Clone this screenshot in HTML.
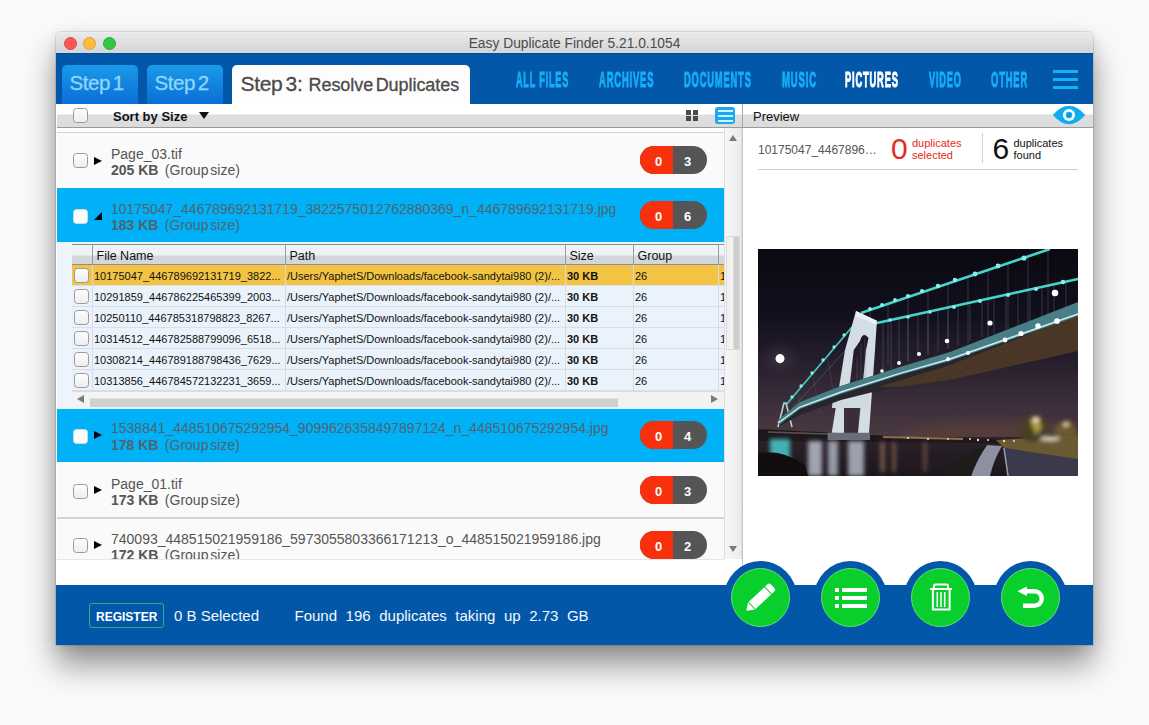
<!DOCTYPE html>
<html><head><meta charset="utf-8">
<style>
*{box-sizing:border-box;margin:0;padding:0}
html,body{width:1149px;height:725px;overflow:hidden;background:#fafafa;font-family:"Liberation Sans",sans-serif}
.a{position:absolute}
#win{position:absolute;left:56px;top:32px;width:1037px;height:613px;background:#fff;border-radius:5px 5px 0 0;box-shadow:0 0 0 1px rgba(0,0,0,0.10),0 20px 32px rgba(0,0,0,0.42),0 4px 14px rgba(0,0,0,0.10);overflow:hidden}
#title{left:0;top:0;width:1037px;height:23px;background:linear-gradient(#f4f4f4 0,#f4f4f4 1px,#e9e9e9 2px,#d9d9d9 18px,#d3d9df 19px,#d3d9df 22px);border-bottom:1px solid #0a4a92}
.tl{position:absolute;top:6px;width:13px;height:13px;border-radius:50%}
#ttext{left:0;width:1037px;top:5px;text-align:center;font-size:13.8px;color:#4b4b4b}
#hdr{left:0;top:23px;width:1037px;height:50px;background:#0357a8}
.tab{position:absolute;top:11px;height:39px;border-radius:5px 5px 0 0;background:linear-gradient(#1a9ae8,#0a6ed6);color:#8fd5fc;font-size:20.5px;letter-spacing:-0.4px;word-spacing:-2.5px;-webkit-text-stroke:0.3px currentColor}
.nav{position:absolute;top:12.5px;font-size:22px;font-weight:bold;color:#16aef6;transform-origin:0 0;white-space:nowrap;-webkit-text-stroke:1.1px currentColor;letter-spacing:2px}
.cb{position:absolute;width:15px;height:15px;border:1px solid #9a9a9a;border-radius:3.5px;background:linear-gradient(#fdfdfd,#eeeeee)}
.tri{position:absolute;width:0;height:0;border-top:4.5px solid transparent;border-bottom:4.5px solid transparent;border-left:8.5px solid #000}
.grp{position:absolute;left:1px;width:667px;background:#f9f9f9}
.gt{position:absolute;left:55px;top:1px;font-size:14px;line-height:16px;white-space:nowrap;margin-top:1px}
.th{font-size:12.5px;color:#111;white-space:nowrap}
.td{font-size:11px;line-height:13px;color:#111;white-space:nowrap}
.gname{position:absolute;left:55px;font-size:14px;color:#5a5a5a;white-space:nowrap}
.gsize{position:absolute;left:55px;font-size:14px;color:#5a5a5a;white-space:nowrap}
.gsize b{font-weight:bold}
.badge{position:absolute;left:584px;width:67px;height:28px;border-radius:14px;overflow:hidden;background:#555}
.badge .r{position:absolute;left:0;top:0;width:33px;height:28px;background:#f9300c}
.badge span{position:absolute;top:8px;width:33px;text-align:center;color:#fff;font-weight:bold;font-size:13px}
.row{position:absolute;left:16px;width:652px;height:21px;background:#eaf3fb;border-bottom:1px solid #d7dde3;font-size:11px;color:#111;white-space:nowrap}
.row .c{position:absolute;top:5px}
.vl{position:absolute;top:0;width:1px;background:#cfd6dc}
.btn .g{position:absolute;left:7px;top:7px;width:59px;height:59px;border-radius:50%;background:radial-gradient(circle at 50% 45%,#12cc30 0%,#10c22c 70%,#18b730 100%);border:1px solid #6fd77a}
</style></head><body>
<div id="win"><div id="in" style="position:absolute;left:0;top:-1px;width:1037px;height:614px">
  <div id="title" class="a">
    <div class="tl" style="left:8px;background:#fc5753;border:1px solid #de4440"></div>
    <div class="tl" style="left:27px;background:#fdbc40;border:1px solid #dea236"></div>
    <div class="tl" style="left:47px;background:#33c748;border:1px solid #27aa35"></div>
    <div id="ttext" class="a">Easy Duplicate Finder 5.21.0.1054</div>
  </div>
  <div id="hdr" class="a">
    <div class="tab" style="left:6px;width:76px"><span class="a" style="left:7.5px;top:5.5px">Step 1</span></div>
    <div class="tab" style="left:91px;width:76px"><span class="a" style="left:7.5px;top:5.5px">Step 2</span></div>
    <div class="tab" style="left:176px;width:238px;background:#fdfdfd;color:#4a4a4a"><span class="a" style="left:8.5px;top:7px;font-size:21px;letter-spacing:-0.3px">Step 3:</span><span class="a" style="left:76.5px;top:10px;font-size:18px;letter-spacing:-0.05px">Resolve Duplicates</span></div>
    <div class="nav" style="left:460px;transform:scaleX(0.4122)">ALL FILES</div>
    <div class="nav" style="left:543px;transform:scaleX(0.4266)">ARCHIVES</div>
    <div class="nav" style="left:628px;transform:scaleX(0.4238)">DOCUMENTS</div>
    <div class="nav" style="left:725.5px;transform:scaleX(0.4331)">MUSIC</div>
    <div class="nav" style="left:789px;transform:scaleX(0.4225);color:#fff">PICTURES</div>
    <div class="nav" style="left:873px;transform:scaleX(0.4185)">VIDEO</div>
    <div class="nav" style="left:935px;transform:scaleX(0.4261)">OTHER</div>
    <div class="a" style="left:997px;top:15.8px;width:25px;height:3.2px;background:#12b0f8"></div>
    <div class="a" style="left:997px;top:23.7px;width:25px;height:3.3px;background:#12b0f8"></div>
    <div class="a" style="left:997px;top:31.7px;width:25px;height:3.3px;background:#12b0f8"></div>
  </div>
  <!-- left toolbar -->
  <div class="a" style="left:1px;top:73px;width:685px;height:24px;background:linear-gradient(#fff 0,#fff 10px,#dedede 11px,#dcdcdc 100%);border-bottom:1px solid #9a9a9a"></div>
  <div class="cb" style="left:17px;top:77px"></div>
  <div class="a" style="left:57px;top:78px;font-size:13px;font-weight:bold;color:#111">Sort by Size</div>
  <div class="a" style="left:143px;top:81px;width:0;height:0;border-left:5px solid transparent;border-right:5px solid transparent;border-top:7px solid #111"></div>
  <!-- grid icon -->
  <div class="a" style="left:630px;top:79px;width:5px;height:5px;background:#4a4a4a"></div>
  <div class="a" style="left:637px;top:79px;width:5px;height:5px;background:#4a4a4a"></div>
  <div class="a" style="left:630px;top:85px;width:5px;height:5px;background:#4a4a4a"></div>
  <div class="a" style="left:637px;top:85px;width:5px;height:5px;background:#4a4a4a"></div>
  <!-- list icon -->
  <div class="a" style="left:659px;top:76px;width:20px;height:17px;border-radius:3px;background:#1aa8ee"></div>
  <div class="a" style="left:661.8px;top:78.6px;width:15px;height:2.8px;background:#c8f6ff"></div>
  <div class="a" style="left:661.8px;top:83.6px;width:15px;height:2.8px;background:#c8f6ff"></div>
  <div class="a" style="left:661.8px;top:88.6px;width:15px;height:2.8px;background:#c8f6ff"></div>
  <!-- preview header -->
  <div class="a" style="left:686px;top:73px;width:351px;height:24px;background:linear-gradient(#fff 0,#fff 10px,#dedede 11px,#dcdcdc 100%);border-bottom:1px solid #9a9a9a;border-left:1px solid #a8a8a8"></div>
  <div class="a" style="left:697px;top:78px;font-size:13px;color:#111">Preview</div>

  <!-- list area -->
  <div id="list" class="a" style="left:0;top:97px;width:686px;height:457px;background:#fff"></div>
  <div class="a" style="left:1px;top:101px;width:667px;height:1px;background:#d4d4d4"></div>
<div class="a" style="left:1px;top:102px;width:667px;height:55px;background:#fafafa"></div>
<div class="cb" style="left:17px;top:122px;"></div>
<div class="tri" style="left:38px;top:125.5px"></div>
<div class="gt" style="top:114px;color:#555">Page_03.tif</div>
<div class="gt" style="top:130px;color:#555"><b>205 KB</b> <span style="word-spacing:-2px;margin-left:2.5px">(Group size)</span></div>
<div class="badge" style="top:115px"><div class="r"></div><span style="left:2px">0</span><span style="left:31px">3</span></div>
<div class="a" style="left:1px;top:157px;width:667px;height:54px;background:#00b1f7"></div>
<div class="cb" style="left:17px;top:177.5px;background:#fbfbfb;border-color:#c9d9e4"></div>
<div class="a" style="left:38px;top:181px;width:0;height:0;border-left:8px solid transparent;border-bottom:8px solid #000"></div>
<div class="gt" style="top:168.7px;color:#50646f">10175047_446789692131719_3822575012762880369_n_446789692131719.jpg</div>
<div class="gt" style="top:185.4px;color:#50646f"><b>183 KB</b> <span style="word-spacing:-2px;margin-left:2.5px">(Group size)</span></div>
<div class="badge" style="top:170px"><div class="r"></div><span style="left:2px">0</span><span style="left:31px">6</span></div>
<div class="a" style="left:1px;top:211px;width:667px;height:167px;background:#edf4fb"></div>
<div class="a" style="left:16px;top:213px;width:652px;height:21px;background:linear-gradient(#eef3f7 0,#eef3f7 10px,#d3d7db 11px,#d3d7db 100%);border-top:1px solid #8e8e8e;border-bottom:1px solid #8e8e8e"></div>
<div class="a" style="left:36px;top:213px;width:1px;height:20px;background:#9a9a9a"></div>
<div class="a" style="left:229px;top:213px;width:1px;height:20px;background:#9a9a9a"></div>
<div class="a" style="left:509px;top:213px;width:1px;height:20px;background:#9a9a9a"></div>
<div class="a" style="left:577px;top:213px;width:1px;height:20px;background:#9a9a9a"></div>
<div class="a" style="left:662px;top:213px;width:1px;height:20px;background:#9a9a9a"></div>
<div class="a th" style="left:40.5px;top:217.5px">File Name</div>
<div class="a th" style="left:233.5px;top:217.5px">Path</div>
<div class="a th" style="left:513.5px;top:217.5px">Size</div>
<div class="a th" style="left:581.5px;top:217.5px">Group</div>
<div class="a" style="left:16px;top:234px;width:652px;height:21px;background:#f3c443;border-bottom:1px solid #d9dfe5"></div>
<div class="cb" style="left:18px;top:237px"></div>
<div class="a td" style="left:38px;top:239px">10175047_446789692131719_3822...</div>
<div class="a td" style="left:231px;top:239px">/Users/YaphetS/Downloads/facebook-sandytai980 (2)/...</div>
<div class="a td" style="left:511px;top:239px;font-weight:bold">30 KB</div>
<div class="a td" style="left:579px;top:239px">26</div>
<div class="a td" style="left:664px;top:239px;width:4px;overflow:hidden">1</div>
<div class="a" style="left:16px;top:255px;width:652px;height:21px;background:#eaf3fb;border-bottom:1px solid #d9dfe5"></div>
<div class="cb" style="left:18px;top:258px"></div>
<div class="a td" style="left:38px;top:260px">10291859_446786225465399_2003...</div>
<div class="a td" style="left:231px;top:260px">/Users/YaphetS/Downloads/facebook-sandytai980 (2)/...</div>
<div class="a td" style="left:511px;top:260px;font-weight:bold">30 KB</div>
<div class="a td" style="left:579px;top:260px">26</div>
<div class="a td" style="left:664px;top:260px;width:4px;overflow:hidden">1</div>
<div class="a" style="left:16px;top:276px;width:652px;height:21px;background:#eaf3fb;border-bottom:1px solid #d9dfe5"></div>
<div class="cb" style="left:18px;top:279px"></div>
<div class="a td" style="left:38px;top:281px">10250110_446785318798823_8267...</div>
<div class="a td" style="left:231px;top:281px">/Users/YaphetS/Downloads/facebook-sandytai980 (2)/...</div>
<div class="a td" style="left:511px;top:281px;font-weight:bold">30 KB</div>
<div class="a td" style="left:579px;top:281px">26</div>
<div class="a td" style="left:664px;top:281px;width:4px;overflow:hidden">1</div>
<div class="a" style="left:16px;top:297px;width:652px;height:21px;background:#eaf3fb;border-bottom:1px solid #d9dfe5"></div>
<div class="cb" style="left:18px;top:300px"></div>
<div class="a td" style="left:38px;top:302px">10314512_446782588799096_6518...</div>
<div class="a td" style="left:231px;top:302px">/Users/YaphetS/Downloads/facebook-sandytai980 (2)/...</div>
<div class="a td" style="left:511px;top:302px;font-weight:bold">30 KB</div>
<div class="a td" style="left:579px;top:302px">26</div>
<div class="a td" style="left:664px;top:302px;width:4px;overflow:hidden">1</div>
<div class="a" style="left:16px;top:318px;width:652px;height:21px;background:#eaf3fb;border-bottom:1px solid #d9dfe5"></div>
<div class="cb" style="left:18px;top:321px"></div>
<div class="a td" style="left:38px;top:323px">10308214_446789188798436_7629...</div>
<div class="a td" style="left:231px;top:323px">/Users/YaphetS/Downloads/facebook-sandytai980 (2)/...</div>
<div class="a td" style="left:511px;top:323px;font-weight:bold">30 KB</div>
<div class="a td" style="left:579px;top:323px">26</div>
<div class="a td" style="left:664px;top:323px;width:4px;overflow:hidden">1</div>
<div class="a" style="left:16px;top:339px;width:652px;height:21px;background:#eaf3fb;border-bottom:1px solid #d9dfe5"></div>
<div class="cb" style="left:18px;top:342px"></div>
<div class="a td" style="left:38px;top:344px">10313856_446784572132231_3659...</div>
<div class="a td" style="left:231px;top:344px">/Users/YaphetS/Downloads/facebook-sandytai980 (2)/...</div>
<div class="a td" style="left:511px;top:344px;font-weight:bold">30 KB</div>
<div class="a td" style="left:579px;top:344px">26</div>
<div class="a td" style="left:664px;top:344px;width:4px;overflow:hidden">1</div>
<div class="a" style="left:36px;top:234px;width:1px;height:126px;background:#d6dce2"></div>
<div class="a" style="left:229px;top:234px;width:1px;height:126px;background:#d6dce2"></div>
<div class="a" style="left:509px;top:234px;width:1px;height:126px;background:#d6dce2"></div>
<div class="a" style="left:577px;top:234px;width:1px;height:126px;background:#d6dce2"></div>
<div class="a" style="left:662px;top:234px;width:1px;height:126px;background:#d6dce2"></div>
<div class="a" style="left:16px;top:360px;width:652px;height:16px;background:#f2f2f2;border-top:1px solid #dcdcdc"></div>
<div class="a" style="left:34px;top:361px;width:528px;height:15px;background:linear-gradient(#f4f4f4 0,#f4f4f4 6px,#cfcfcf 7px,#cfcfcf 100%)"></div>
<div class="a" style="left:21px;top:364px;width:0;height:0;border-top:4px solid transparent;border-bottom:4px solid transparent;border-right:7px solid #7a7a7a"></div>
<div class="a" style="left:655px;top:364px;width:0;height:0;border-top:4px solid transparent;border-bottom:4px solid transparent;border-left:7px solid #7a7a7a"></div>
<div class="a" style="left:1px;top:378px;width:667px;height:53px;background:#00b1f7"></div>
<div class="cb" style="left:17px;top:398px;background:#fbfbfb;border-color:#c9d9e4"></div>
<div class="tri" style="left:38px;top:400.4px"></div>
<div class="gt" style="top:388px;color:#50646f">1538841_448510675292954_9099626358497897124_n_448510675292954.jpg</div>
<div class="gt" style="top:405.3px;color:#50646f"><b>178 KB</b> <span style="word-spacing:-2px;margin-left:2.5px">(Group size)</span></div>
<div class="badge" style="top:390px"><div class="r"></div><span style="left:2px">0</span><span style="left:31px">4</span></div>
<div class="a" style="left:1px;top:431px;width:667px;height:55px;background:#fafafa"></div>
<div class="cb" style="left:17px;top:452.6px;"></div>
<div class="tri" style="left:38px;top:455px"></div>
<div class="gt" style="top:443.8px;color:#555">Page_01.tif</div>
<div class="gt" style="top:460.2px;color:#555"><b>173 KB</b> <span style="word-spacing:-2px;margin-left:2.5px">(Group size)</span></div>
<div class="badge" style="top:445px"><div class="r"></div><span style="left:2px">0</span><span style="left:31px">3</span></div>
<div class="a" style="left:1px;top:486px;width:667px;height:2px;background:#d4d4d4"></div>
<div class="a" style="left:1px;top:488px;width:667px;height:40px;background:#fafafa"></div>
<div class="cb" style="left:17px;top:507.3px;"></div>
<div class="tri" style="left:38px;top:510.3px"></div>
<div class="gt" style="top:498.6px;color:#555">740093_448515021959186_5973055803366171213_o_448515021959186.jpg</div>
<div class="gt" style="top:515.4px;color:#555"><b>172 KB</b> <span style="word-spacing:-2px;margin-left:2.5px">(Group size)</span></div>
<div class="badge" style="top:500px"><div class="r"></div><span style="left:2px">0</span><span style="left:31px">2</span></div>
<div class="a" style="left:1px;top:528px;width:667px;height:26px;background:#fff;border-top:1px solid #e6e6e6"></div>


  <!-- preview panel -->
  <div class="a" style="left:686px;top:97px;width:351px;height:457px;background:#fff;border-left:1px solid #c8c8c8"></div>

<div class="a" style="left:668px;top:97px;width:18px;height:431px;background:linear-gradient(90deg,#f6f6f6,#ececec);border-left:1px solid #dedede;border-right:1px solid #dcdcdc"></div>
<div class="a" style="left:673px;top:104px;width:0;height:0;border-left:4px solid transparent;border-right:4px solid transparent;border-bottom:6px solid #7a7a7a"></div>
<div class="a" style="left:673px;top:515px;width:0;height:0;border-left:4px solid transparent;border-right:4px solid transparent;border-top:6px solid #7a7a7a"></div>
<div class="a" style="left:670px;top:205px;width:14px;height:114px;background:linear-gradient(90deg,#f2f2f2 0,#f2f2f2 6px,#cdcdcd 7px,#cdcdcd 100%);border:1px solid #dadada"></div>
<div class="a" style="left:702px;top:112px;font-size:12px;color:#555">10175047_4467896…</div>
<div class="a" style="left:835px;top:102px;font-size:30px;line-height:32px;color:#e62a1e">0</div>
<div class="a" style="left:856px;top:107px;font-size:11px;line-height:11.9px;color:#e62a1e">duplicates<br>selected</div>
<div class="a" style="left:926px;top:102px;width:1px;height:30px;background:#d4d4d4"></div>
<div class="a" style="left:936.5px;top:102px;font-size:30px;line-height:32px;color:#111">6</div>
<div class="a" style="left:957.5px;top:107px;font-size:11px;line-height:11.9px;color:#111">duplicates<br>found</div>
<div class="a" style="left:702px;top:138px;width:320px;height:1px;background:#cfcfcf"></div>
<svg class="a" style="left:702px;top:218px" width="320" height="227" viewBox="0 0 320 227">
<defs>
<linearGradient id="sky" gradientUnits="userSpaceOnUse" x1="0" y1="0" x2="0" y2="227">
<stop offset="0" stop-color="#0a0a12"/><stop offset="0.28" stop-color="#110f1c"/><stop offset="0.5" stop-color="#271f2e"/><stop offset="0.7" stop-color="#3e303c"/><stop offset="0.84" stop-color="#4c3a40"/>
</linearGradient>
<linearGradient id="water" x1="0" y1="0" x2="0" y2="1">
<stop offset="0" stop-color="#2c222a"/><stop offset="1" stop-color="#1c161c"/>
</linearGradient>
<filter id="bl" x="-20%" y="-20%" width="140%" height="140%"><feGaussianBlur stdDeviation="0.7"/></filter>
<filter id="bl2" x="-50%" y="-50%" width="200%" height="200%"><feGaussianBlur stdDeviation="2.2"/></filter>
<filter id="bl4" x="-50%" y="-50%" width="200%" height="200%"><feGaussianBlur stdDeviation="5"/></filter>
</defs>
<rect width="320" height="227" fill="url(#sky)"/>
<ellipse cx="230" cy="190" rx="90" ry="18" fill="#5a4038" opacity="0.6" filter="url(#bl4)"/>
<ellipse cx="22" cy="110" rx="14" ry="12" fill="#3a3040" opacity="0.6" filter="url(#bl4)"/>
<!-- suspenders -->
<g stroke="#6a7888" stroke-width="0.7" opacity="0.55">
<path d="M125 72 V122 M133 70 V120 M141 68 V116 M150 67 V113 M160 65 V108 M170 63 V106 M180 61 V102 M190 59 V99 M200 57 V96 M212 55 V92 M224 52 V88 M236 50 V85 M248 47 V81 M260 45 V78 M272 42 V75 M284 39 V71 M296 36 V68 M308 33 V64"/>
<path d="M112 60 V118 M130 55 V116 M150 48 V112 M170 42 V105 M190 35 V100 M210 29 V94 M230 22 V88 M250 15 V82 M270 8 V76 M290 1 V70"/>
<path d="M40 145 L44 170 M55 128 L62 165 M70 110 L78 158" opacity="0.6"/>
</g>
<g filter="url(#bl)">
<!-- left main cable -->
<path d="M28 156 L94 78" stroke="#40c8c0" stroke-width="1.8" fill="none"/>
<path d="M30 164 L98 90" stroke="#50707a" stroke-width="0.8" fill="none" opacity="0.7"/>
<!-- far tower -->
<path d="M20 178 L26 154 L28 154 L34 178" stroke="#b0d8d8" stroke-width="1.6" fill="none"/>
<!-- main cables right -->
<path d="M103 64 L292 0" stroke="#48d4ca" stroke-width="2.6" fill="none"/>
<path d="M119 74 L320 30" stroke="#48d4ca" stroke-width="2.4" fill="none"/>
</g>
<!-- tower -->
<g filter="url(#bl)">
<path d="M98 62 L118.9 71.7 L117 101 L111 184 L73.7 184 L87 101Z" fill="#d4dce4"/>
<path d="M102 92 Q105 82 110.5 89 L108 101 L100 184 L86 184 L95.8 101Z" fill="url(#sky)"/>
<g stroke="#6a7888" stroke-width="0.6" opacity="0.5"><path d="M103 94 V150 M107 90 V146 M99 108 V165"/></g>
<path d="M98 62 L118.9 71.7 L118.6 76 L97.5 67Z" fill="#e8eef2"/>
</g>
<path d="M75 146 L111 143 L110.6 159 L74 159Z" fill="#d0d8e0" filter="url(#bl)"/>
<path d="M86 159 L100 159 L100 184 L86 184Z" fill="#3a2e38"/>
<!-- deck -->
<path d="M19 172 L42 153 L83 137 L142 118 L192 103 L320 54 L320 102 L192 131 L142 138 L111 144 L83 151 L42 166 L22 177Z" fill="#28262c"/>
<path d="M120 138 L192 116 L320 66 L320 102 L192 131 L142 138Z" fill="#4a3626"/>
<g stroke="#5a4028" stroke-width="1" opacity="0.7"><path d="M200 118 L215 126 M240 100 L255 110 M280 82 L295 92"/></g>
<path d="M19 172 L42 153 L83 137 L142 118 L192 103 L320 53 L320 67 L192 112 L142 126 L83 145 L42 160 L21 176Z" fill="#4e8890" opacity="0.9" filter="url(#bl)"/>
<path d="M20 174 L42 158 L83 143 L142 124.4 L192 110 L320 65" stroke="#c8f0f0" stroke-width="1.4" fill="none" filter="url(#bl)"/>
<!-- water -->
<rect x="0" y="188" width="320" height="39" fill="url(#water)"/>
<path d="M0 180 L60 183 L150 188 L260 191 L320 190 L320 195 L0 192Z" fill="#1c181c"/>
<g filter="url(#bl2)">
<rect x="12" y="190" width="20" height="32" fill="#48c0c0" opacity="0.9"/>
<rect x="50" y="192" width="14" height="35" fill="#c8d0e0" opacity="0.75"/>
<rect x="70" y="192" width="10" height="35" fill="#c8d0e0" opacity="0.7"/>
<rect x="90" y="192" width="16" height="35" fill="#d0d8e8" opacity="0.7"/>
<rect x="122" y="193" width="5" height="30" fill="#b08068" opacity="0.55"/>
<rect x="134" y="193" width="4" height="30" fill="#b08068" opacity="0.5"/>
<rect x="165" y="193" width="4" height="30" fill="#a07860" opacity="0.45"/>
</g>
<g filter="url(#bl)"><path d="M125 188 L205 190" stroke="#d8a870" stroke-width="1.8" opacity="0.6"/><path d="M10 183 L70 185" stroke="#9a9090" stroke-width="1.5" opacity="0.5"/></g>
<path d="M69.6 183.8 L112 183.8 L112 191 L69.6 191Z" fill="#6a6e7a" filter="url(#bl)"/>
<!-- right bank -->
<path d="M238 191 L320 186 L320 212 L246 199Z" fill="#6a5a32"/>
<path d="M246 199 L320 210 L320 227 L250 227Z" fill="#3a3a4c"/>
<path d="M229 196 L244 197 Q236 210 232 227 L213 227 Q219 210 229 196Z" fill="#8e90a2" filter="url(#bl)"/>
<path d="M246 199 L250 227" stroke="#9a9cae" stroke-width="1.5" filter="url(#bl)"/>
<path d="M186 227 Q194 208 229 196 Q219 210 213 227Z" fill="#1e1c18"/>
<path d="M0 204 Q25 200 47 216 L50 227 L0 227Z" fill="#120e10"/>
<g filter="url(#bl2)">
<path d="M262 176 Q268 166 280 168 Q292 170 291 182 Q288 192 272 193 Q260 190 262 176Z" fill="#4a4024"/>
<path d="M272 172 Q280 168 284 178 L278 186Z" fill="#b09848"/>
<path d="M296 178 Q306 170 316 174 L320 188 L298 189Z" fill="#6a5a30"/>
<circle cx="278" cy="170.4" r="3" fill="#ffe8c0"/><circle cx="308" cy="175" r="2.5" fill="#ffe0b8"/>
<ellipse cx="292" cy="190" rx="10" ry="2" fill="#e8e0d8"/>
</g>
<g fill="#f0d8b0" filter="url(#bl)"><circle cx="212" cy="190" r="1"/><circle cx="220" cy="191" r="1.2"/><circle cx="230" cy="191" r="1"/><circle cx="246" cy="192" r="1.2"/><circle cx="256" cy="192" r="1"/><circle cx="150" cy="189" r="1"/><circle cx="170" cy="190" r="1.1"/><circle cx="190" cy="190" r="1"/></g>
<!-- lights -->
<g fill="#80f0e8" filter="url(#bl)">
<circle cx="112" cy="60" r="1.95"/><circle cx="124" cy="56" r="1.95"/><circle cx="137" cy="51" r="1.95"/><circle cx="150" cy="47" r="2.10"/><circle cx="164" cy="42" r="2.10"/><circle cx="180" cy="37" r="2.25"/><circle cx="197" cy="31" r="2.25"/><circle cx="217" cy="25" r="2.40"/><circle cx="240" cy="17" r="2.40"/><circle cx="266" cy="9" r="2.55"/>
<circle cx="132" cy="71" r="1.80"/><circle cx="150" cy="68" r="1.80"/><circle cx="172" cy="63" r="1.80"/><circle cx="196" cy="58" r="1.95"/><circle cx="222" cy="52" r="1.95"/><circle cx="250" cy="46" r="2.10"/><circle cx="278" cy="40" r="2.10"/><circle cx="305" cy="33" r="2.25"/>
<circle cx="86" cy="86" r="1.65"/><circle cx="76" cy="98" r="1.65"/><circle cx="65" cy="111" r="1.65"/><circle cx="54" cy="124" r="1.65"/><circle cx="43" cy="137" r="1.65"/><circle cx="34" cy="148" r="1.65"/>
</g>
<g fill="#fff" filter="url(#bl)">
<circle cx="22" cy="109.6" r="4.55"/>
<circle cx="297" cy="44" r="3.25"/><circle cx="232" cy="74" r="2.60"/><circle cx="189" cy="92" r="2.34"/><circle cx="161" cy="105" r="2.08"/><circle cx="141" cy="114" r="1.95"/><circle cx="124" cy="122" r="1.82"/>
<circle cx="299" cy="72" r="2.86"/><circle cx="280" cy="77" r="2.73"/><circle cx="263" cy="84.5" r="2.60"/><circle cx="247" cy="91" r="2.47"/><circle cx="210" cy="104" r="1.95"/><circle cx="190" cy="110" r="1.95"/>
</g>
</svg>

<svg class="a" style="left:996px;top:74.3px" width="34" height="20" viewBox="0 0 34 20"><path d="M0.8 10 Q17 -8.6 33.2 10 Q17 28.6 0.8 10Z" fill="#10acf0"/><circle cx="17" cy="10" r="6.1" fill="#f4fbff"/><circle cx="17" cy="10" r="3.2" fill="#10acf0"/><circle cx="17" cy="10" r="2.2" fill="#1a90e0"/></svg>
  <!-- bottom bar -->
  <div class="a" style="left:0;top:554px;width:1037px;height:60px;background:#0357a8"></div>
  <div class="a" style="left:33px;top:571.5px;width:75px;height:25px;border:1px solid #2db37a;border-radius:3px"></div>
  <div class="a" style="left:40px;top:578.5px;font-size:12px;font-weight:bold;color:#fff">REGISTER</div>
  <div class="a" style="left:118px;top:576px;font-size:15px;color:#f4f8fc">0 B Selected</div>
  <div class="a" style="left:238.5px;top:576px;font-size:15px;color:#f4f8fc;word-spacing:4.4px">Found 196 duplicates taking up 2.73 GB</div>
<div class="a" style="left:668.0px;top:530.0px;width:73px;height:73px;border-radius:50%;background:#0357a8"></div>
<div class="a" style="left:675.0px;top:537.0px;width:59px;height:59px;border-radius:50%;background:#08cf2c;border:1px solid #66e070"></div>
<div class="a" style="left:758.0px;top:530.0px;width:73px;height:73px;border-radius:50%;background:#0357a8"></div>
<div class="a" style="left:765.0px;top:537.0px;width:59px;height:59px;border-radius:50%;background:#08cf2c;border:1px solid #66e070"></div>
<div class="a" style="left:848.0px;top:530.0px;width:73px;height:73px;border-radius:50%;background:#0357a8"></div>
<div class="a" style="left:855.0px;top:537.0px;width:59px;height:59px;border-radius:50%;background:#08cf2c;border:1px solid #66e070"></div>
<div class="a" style="left:938.0px;top:530.0px;width:73px;height:73px;border-radius:50%;background:#0357a8"></div>
<div class="a" style="left:945.0px;top:537.0px;width:59px;height:59px;border-radius:50%;background:#08cf2c;border:1px solid #66e070"></div>
<svg class="a" style="left:0;top:0" width="1037" height="614" viewBox="56 31 1037 614">
<g transform="translate(759.5 598.5) rotate(-43)" fill="#fff">
<path d="M-18 0 L-11 -5 L-11 5 Z"/>
<rect x="-10" y="-5" width="21.3" height="10"/>
<path d="M12.3 -5 H15.5 Q18 -5 18 -2.5 V2.5 Q18 5 15.5 5 H12.3 Z"/>
</g>
<g fill="#fff">
<rect x="835" y="588" width="4" height="4"/><rect x="842" y="588" width="25" height="4"/>
<rect x="835" y="596" width="4" height="4"/><rect x="842" y="596" width="25" height="4"/>
<rect x="835" y="604" width="4" height="4"/><rect x="842" y="604" width="25" height="4"/>
</g>
<g fill="none" stroke="#fff" stroke-width="2">
<path d="M934 589 V586 Q934 584.6 935.4 584.6 H946.6 Q948 584.6 948 586 V589"/>
<path d="M930.2 589 H952"/>
<path d="M932.9 589.5 V609.4 H949.6 V589.5"/>
<path d="M937.3 592 V607 M941 592 V607 M944.7 592 V607" stroke-width="1.6"/>
</g>
<path d="M1017.4 591.3 L1026.8 586.6 L1026.8 596 Z" fill="#fff"/>
<path d="M1025 591.3 H1034.5 A7.25 7.25 0 0 1 1034.5 605.8 H1023" fill="none" stroke="#fff" stroke-width="4.4"/>
</svg>

</div></div>
</body></html>
